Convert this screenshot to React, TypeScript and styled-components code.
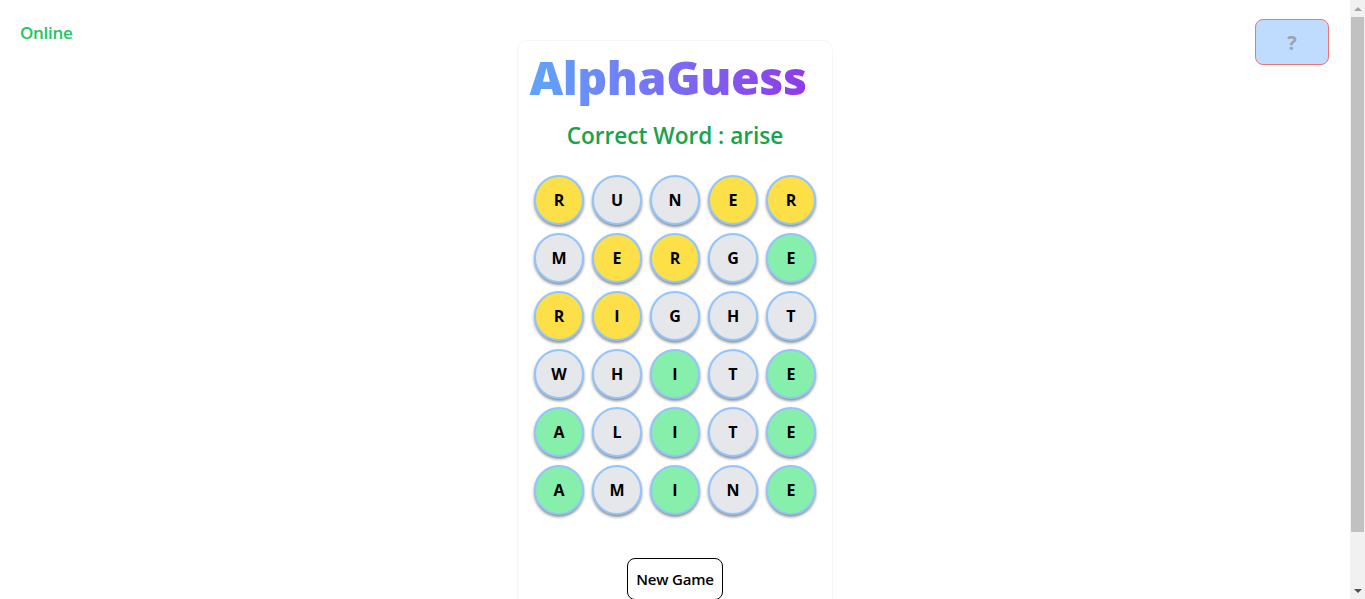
import React from "react";
import styled, { createGlobalStyle } from "styled-components";

const Global = createGlobalStyle`
  html, body { margin: 0; padding: 0; background: #ffffff; }
  body { font-family: "Open Sans", "Noto Sans", sans-serif; margin-right: 15px; }
  * { box-sizing: border-box; }
`;

const Page = styled.div`
  display: grid;
  grid-template-columns: 1fr auto 1fr;
  align-items: start;
  min-height: 656px;
`;

const Status = styled.div`
  justify-self: start;
  padding: 21px 0 0 20px;
  color: #22c55e;
  font-weight: 600;
  font-size: 17px;
  letter-spacing: -0.3px;
`;

const HelpButton = styled.button`
  justify-self: end;
  margin: 19px 21px 0 0;
  width: 74px;
  height: 46px;
  background: #bfdbfe;
  border: 1px solid #f87171;
  border-radius: 8px;
  color: #9ca3af;
  font-family: "Open Sans", sans-serif;
  font-weight: 700;
  font-size: 20px;
  display: flex;
  align-items: center;
  justify-content: center;
  cursor: pointer;
`;

const Card = styled.main`
  margin-top: 40px;
  width: 316px;
  border: 1px solid #f6f6f6;
  border-radius: 10px;
  display: flex;
  flex-direction: column;
  align-items: center;
  padding: 7px 0 40px;
`;

const Title = styled.h1`
  margin: 0;
  padding-right: 14px;
  font-size: 46.5px;
  line-height: 58px;
  font-weight: 800;
  letter-spacing: -0.4px;
  background: linear-gradient(90deg, #60a5fa, #9333ea);
  -webkit-background-clip: text;
  background-clip: text;
  color: transparent;
`;

const Answer = styled.h2`
  margin: 14px 0 0;
  font-size: 22.6px;
  line-height: 32px;
  font-weight: 600;
  color: #16a34a;
  letter-spacing: 0;
`;

const Board = styled.div`
  margin-top: 23px;
  display: grid;
  grid-template-columns: repeat(5, 50px);
  grid-auto-rows: 50px;
  gap: 8px;
`;

const tileColors = {
  y: "#fde047",
  g: "#86efac",
  n: "#e5e7eb",
} as const;

const Tile = styled.div<{ $state: keyof typeof tileColors }>`
  width: 50px;
  height: 50px;
  border-radius: 50%;
  border: 2px solid #93c5fd;
  background: ${(p) => tileColors[p.$state]};
  box-shadow: 0 2px 3px rgba(0, 0, 0, 0.45);
  display: flex;
  align-items: center;
  justify-content: center;
  font-weight: 700;
  font-size: 16px;
  color: #000;
`;

const NewGame = styled.button`
  margin-top: 43px;
  padding: 10px 8px;
  background: #fff;
  border: 1px solid #000;
  border-radius: 8px;
  font-family: "Open Sans", sans-serif;
  font-weight: 600;
  font-size: 15px;
  letter-spacing: -0.2px;
  color: #000;
  cursor: pointer;
`;

/* classic browser scrollbar chrome, drawn over the right edge */
const ScrollBar = styled.div`
  position: fixed;
  top: 0;
  right: 0;
  width: 15px;
  height: 100vh;
  background: #f1f1f1;
  display: flex;
  flex-direction: column;
  align-items: center;
`;

const Arrow = styled.div<{ $down?: boolean }>`
  height: 17px;
  width: 15px;
  display: flex;
  align-items: center;
  justify-content: center;
  &::after {
    content: "";
    border-left: 4px solid transparent;
    border-right: 4px solid transparent;
    ${(p) =>
      p.$down
        ? "border-top: 4px solid #505050;"
        : "border-bottom: 4px solid #a3a3a3;"}
  }
`;

const Track = styled.div`
  flex: 1;
  width: 100%;
  padding: 0 1px;
`;

const Thumb = styled.div`
  height: 515px;
  background: #c1c1c1;
`;

const rows: [string, string][] = [
  ["RUNER", "ynnyy"],
  ["MERGE", "nyyng"],
  ["RIGHT", "yynnn"],
  ["WHITE", "nngng"],
  ["ALITE", "gngng"],
  ["AMINE", "gngng"],
];

export default function App() {
  return (
    <>
      <Global />
      <Page>
        <Status>Online</Status>
        <Card>
          <Title>AlphaGuess</Title>
          <Answer>Correct Word : arise</Answer>
          <Board>
            {rows.map(([word, states], r) =>
              word.split("").map((ch, i) => (
                <Tile key={`${r}-${i}`} $state={states[i] as "y" | "g" | "n"}>
                  {ch}
                </Tile>
              ))
            )}
          </Board>
          <NewGame>New Game</NewGame>
        </Card>
        <HelpButton>?</HelpButton>
      </Page>
      <ScrollBar>
        <Arrow />
        <Track>
          <Thumb />
        </Track>
        <Arrow $down />
      </ScrollBar>
    </>
  );
}
